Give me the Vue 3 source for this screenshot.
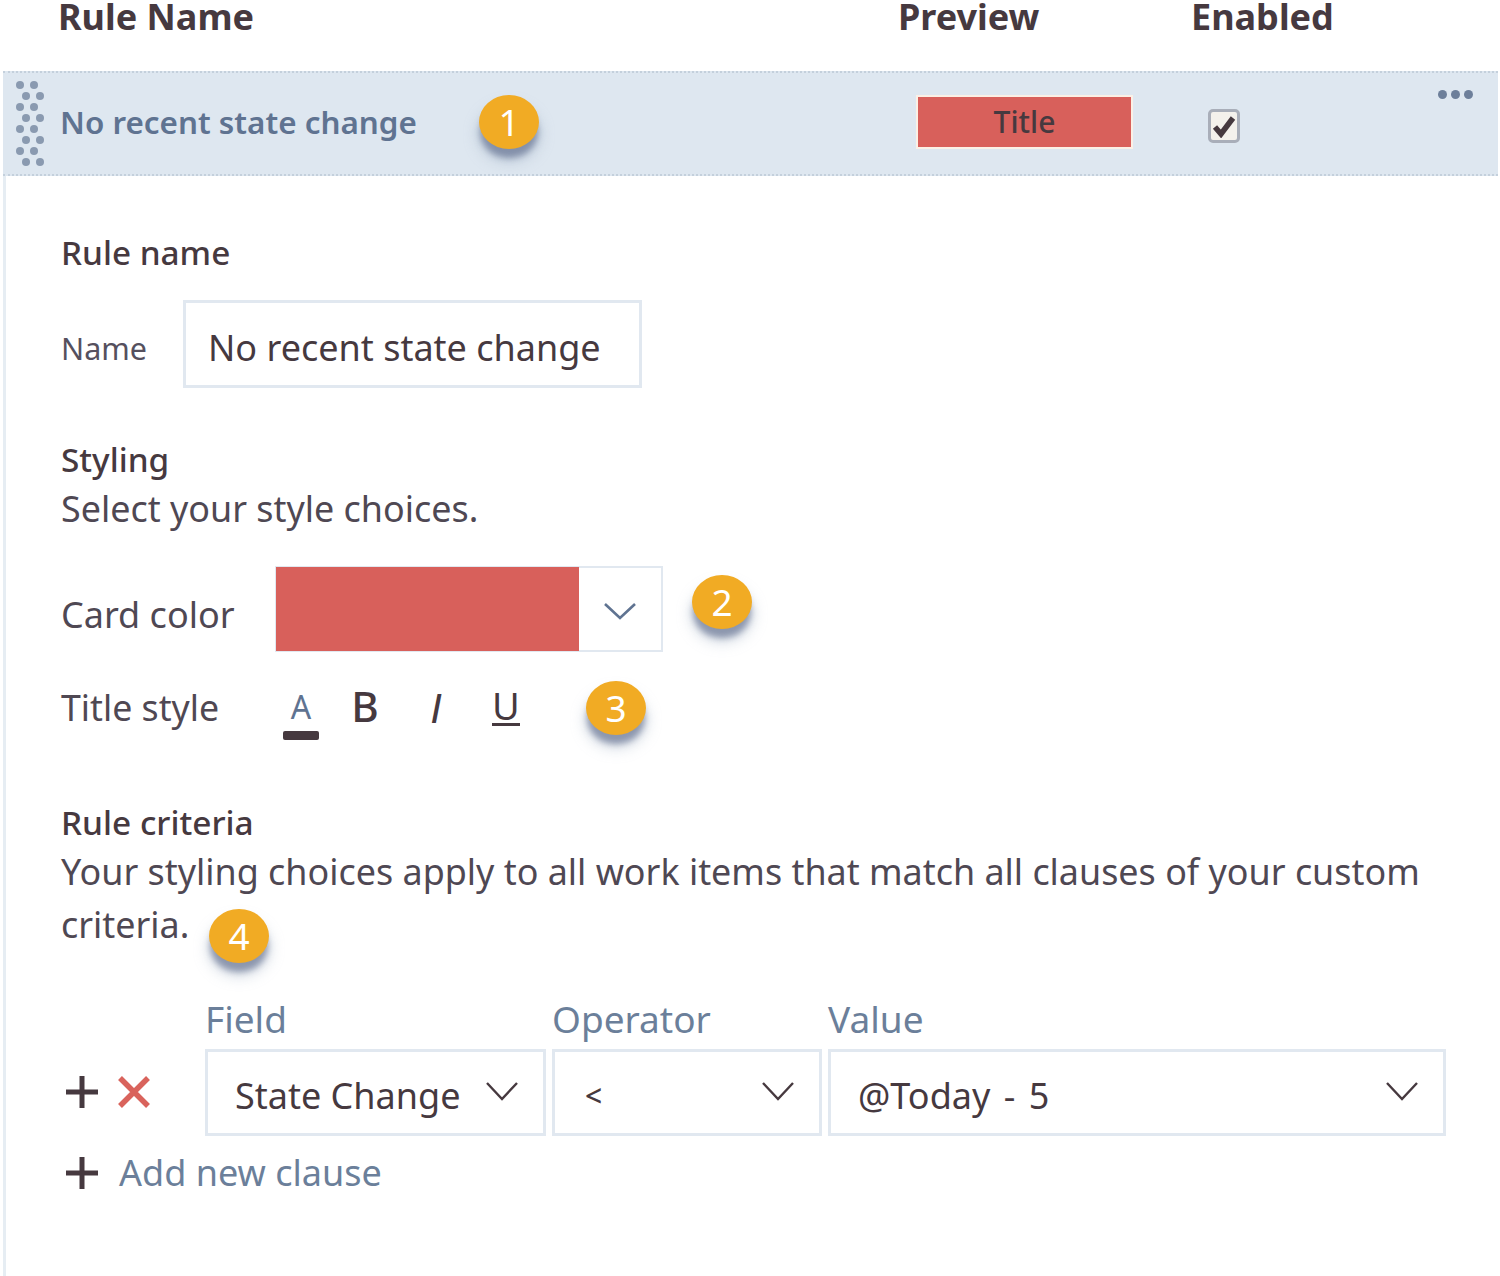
<script setup>
const headers = [
  { label: 'Field', cls: 'col-field' },
  { label: 'Operator', cls: 'col-op' },
  { label: 'Value', cls: 'col-val' }
]
const clauses = [
  { text: 'State Change', cls: 'col-field' },
  { text: '<', cls: 'col-op' },
  { text: '@Today - 5', cls: 'col-val' }
]
const grip = [0, 1, 2, 3, 4, 5, 6, 7]
</script>

<template>
  <div class="page">
    <header class="head">
      <span class="h-name">Rule Name</span>
      <span class="h-preview">Preview</span>
      <span class="h-enabled">Enabled</span>
    </header>

    <div class="rule-row">
      <div class="grip">
        <span v-for="g in grip" :key="g" class="grip-line" :class="{ odd: g % 2 }"><i></i><i></i></span>
      </div>
      <span class="rule-title">No recent state change</span>
      <span class="badge badge-1">1</span>
      <span class="preview">Title</span>
      <span class="check">
        <svg viewBox="0 0 24 24" width="24" height="24"><path d="M3 13l6 7L21 4" fill="none" stroke="#46393f" stroke-width="5.5"/></svg>
      </span>
      <span class="more"><i></i><i></i><i></i></span>
    </div>

    <main class="body">
      <h3 class="sec sec-name">Rule name</h3>
      <div class="name-row">
        <label class="small-label">Name</label>
        <div class="input">No recent state change</div>
      </div>

      <h3 class="sec sec-style">Styling</h3>
      <p class="desc desc-style">Select your style choices.</p>
      <div class="color-row">
        <label class="big-label w-color">Card color</label>
        <div class="picker">
          <div class="swatch"></div>
          <div class="picker-btn">
            <svg class="chev" viewBox="0 0 34 20" width="34" height="20"><path d="M2 3l15 14L32 3" fill="none" stroke="#5f7391" stroke-width="2.6"/></svg>
          </div>
        </div>
        <span class="badge badge-2">2</span>
      </div>
      <div class="title-row">
        <label class="big-label w-title">Title style</label>
        <span class="tool tool-a"><span class="a-letter">A</span><i class="a-bar"></i></span>
        <span class="tool tool-b">B</span>
        <span class="tool tool-i">I</span>
        <span class="tool tool-u"><span class="u-letter">U</span><i class="u-bar"></i></span>
        <span class="badge badge-3">3</span>
      </div>

      <h3 class="sec sec-crit">Rule criteria</h3>
      <p class="desc desc-crit">Your styling choices apply to all work items that match all clauses of your custom criteria.<span class="badge badge-4">4</span></p>

      <div class="grid-head">
        <span v-for="h in headers" :key="h.label" class="col-label" :class="h.cls">{{ h.label }}</span>
      </div>
      <div class="clause">
        <div class="actions">
          <svg viewBox="0 0 36 36" width="36" height="36"><path d="M18 2v32M2 18h32" stroke="#46393f" stroke-width="5" fill="none"/></svg>
          <svg viewBox="0 0 34 34" width="34" height="34"><path d="M3 3l28 28M31 3L3 31" stroke="#d9635c" stroke-width="5.5" fill="none"/></svg>
        </div>
        <div v-for="c in clauses" :key="c.text" class="select" :class="c.cls">
          <span class="select-text">{{ c.text }}</span>
          <svg viewBox="0 0 34 22" width="34" height="22"><path d="M2 3l15 16L32 3" fill="none" stroke="#46393f" stroke-width="2.4"/></svg>
        </div>
      </div>
      <div class="add">
        <svg viewBox="0 0 36 36" width="36" height="36"><path d="M18 2v32M2 18h32" stroke="#46393f" stroke-width="5" fill="none"/></svg>
        <span>Add new clause</span>
      </div>
    </main>
  </div>
</template>

<style>
html, body { margin: 0; background: #fff; }
</style>

<style scoped>
.page {
  width: 1500px;
  height: 1276px;
  overflow: hidden;
  font-family: "Noto Sans", "Open Sans", sans-serif;
  color: #46393f;
  background: #fff;
}
.head {
  height: 71px;
  display: flex;
  font-weight: 700;
  font-size: 36px;
  line-height: 34px;
  padding-left: 58px;
}
.h-name { width: 840px; }
.h-preview { width: 293px; }
.rule-row {
  position: relative;
  height: 105px;
  margin-left: 3px;
  width: 1495px;
  background: #dee7f0;
  display: flex;
  align-items: center;
  box-sizing: border-box;
  border-top: 2px dotted #c4d0dc;
  border-bottom: 2px dotted #c4d0dc;
}
.grip {
  margin-left: 13px;
  width: 30px;
  display: flex;
  flex-direction: column;
  gap: 3px;
}
.grip-line { display: flex; gap: 6px; height: 8px; }
.grip-line.odd { margin-left: 6px; }
.grip-line i { width: 8px; height: 8px; border-radius: 50%; background: #8a9ab0; }
.rule-title {
  margin-left: 14px;
  margin-top: -4px;
  width: 414px;
  font-size: 31.4px;
  font-weight: 600;
  color: #5f7391;
  white-space: nowrap;
}
.badge {
  position: absolute;
  width: 60px;
  height: 54px;
  border-radius: 50%;
  background: #f1ab24;
  color: #fff;
  font-size: 37px;
  font-weight: 400;
  line-height: 54px;
  text-align: center;
  box-shadow: 0 10px 6px -1px rgba(88, 102, 135, .6), 0 12px 14px 2px rgba(150, 165, 190, .35);
}
.badge-1 { left: 476px; top: 22px; }
.preview {
  position: absolute;
  left: 915px;
  top: 24px;
  width: 213px;
  height: 50px;
  background: #d8605b;
  box-shadow: 0 0 0 2px #fbf0e6;
  text-align: center;
  font-size: 30px;
  font-weight: 500;
  line-height: 50px;
}
.check {
  position: absolute;
  left: 1205px;
  top: 36px;
  width: 26px;
  height: 28px;
  border: 3px solid #a9aeb9;
  border-radius: 5px;
  background: #f4f1ec;
  display: flex;
  align-items: center;
  justify-content: center;
}
.check svg { width: 24px; height: 24px; }
.more {
  position: absolute;
  right: 25px;
  top: 17px;
  display: flex;
  gap: 4px;
}
.more i { width: 9px; height: 9px; border-radius: 50%; background: #6d7f9a; }
.body {
  position: relative;
  margin-left: 3px;
  height: 1100px;
  border-left: 3px solid #e6edf3;
  padding-left: 55px;
  box-sizing: border-box;
}
.sec {
  margin: 0;
  font-size: 33.3px;
  font-weight: 500;
  line-height: 44px;
}
.sec-name { padding-top: 54px; }
.name-row {
  display: flex;
  align-items: center;
  margin-top: 26px;
  height: 88px;
}
.small-label { width: 122px; font-size: 30.5px; color: #55505e; padding-top: 8px; }
.input {
  width: 459px;
  height: 88px;
  box-sizing: border-box;
  border: 3px solid #e1e8f0;
  padding-left: 22px;
  font-size: 36px;
  line-height: 90px;
  white-space: nowrap;
}
.sec-style { margin-top: 49px; }
.desc {
  margin: 0;
  font-size: 35.9px;
  line-height: 50px;
  color: #4f4853;
}
.desc-style { margin-top: 3px; }
.color-row {
  position: relative;
  display: flex;
  align-items: center;
  margin-top: 32px;
  height: 86px;
}
.big-label { font-size: 36px; color: #4f4853; white-space: nowrap; padding-top: 10px; }
.w-color { width: 214px; }
.w-title { width: 222px; font-size: 35.7px; padding-top: 2px; }
.picker { display: flex; height: 86px; width: 388px; box-sizing: border-box; border: 2px solid #e1e8f0; }
.swatch { width: 303px; background: #d8605b; margin: -1px 0 -1px -1px; }
.picker-btn { flex: 1; display: flex; align-items: center; justify-content: center; padding-top: 4px; }
.badge-2 { left: 631px; top: 9px; }
.title-row {
  position: relative;
  display: flex;
  align-items: center;
  height: 68px;
  margin-top: 20px;
}
.tool { display: flex; flex-direction: column; align-items: center; color: #46393f; line-height: 1; }
.tool-a { width: 36px; font-size: 32px; color: #5f7391; margin-top: 14px; }
.a-letter { line-height: 42px; }
.a-bar { width: 36px; height: 9px; border-radius: 2px; background: #46393f; margin-top: 3px; }
.tool-b { width: 26px; margin-left: 33px; font-size: 42px; font-weight: 500; margin-top: 0; }
.tool-i { width: 18px; margin-left: 49px; font-size: 42px; font-style: italic; font-family: "Liberation Sans", sans-serif; margin-top: 6px; }
.tool-u { width: 28px; margin-left: 47px; font-size: 38px; margin-top: 0; }
.u-letter { line-height: 36px; }
.u-bar { width: 28px; height: 3px; background: #46393f; }
.badge-3 { left: 525px; top: 9px; }
.sec-crit { margin-top: 60px; font-size: 33.4px; }
.desc-crit { position: relative; width: 1390px; line-height: 53px; margin-top: 1px; }
.badge-4 { left: 148px; top: 64px; }
.grid-head { display: flex; margin-top: 46px; height: 44px; margin-left: 144px; gap: 6px; }
.col-label { font-size: 37px; line-height: 44px; color: #6b7f9a; }
.col-field { width: 341px; }
.col-op { width: 270px; }
.col-val { width: 618px; }
.clause { display: flex; align-items: center; margin-top: 8px; gap: 6px; }
.actions {
  width: 138px;
  display: flex;
  align-items: center;
  gap: 17px;
  margin-top: -2px;
  padding-left: 3px;
  box-sizing: border-box;
}
.select {
  height: 87px;
  box-sizing: border-box;
  border: 3px solid #e1e8f0;
  display: flex;
  align-items: center;
  justify-content: space-between;
  padding: 0 24px 0 27px;
  font-size: 36px;
}
.select-text { padding-top: 6px; }
.select.col-op { padding-left: 30px; }
.select.col-op .select-text { font-size: 30px; font-weight: 500; }
.select.col-val .select-text { word-spacing: 4px; }
.select svg { margin-top: -4px; }
.add {
  display: flex;
  align-items: center;
  gap: 19px;
  margin-top: 12px;
  padding-left: 3px;
  font-size: 36px;
  color: #6b7f9a;
}
</style>
